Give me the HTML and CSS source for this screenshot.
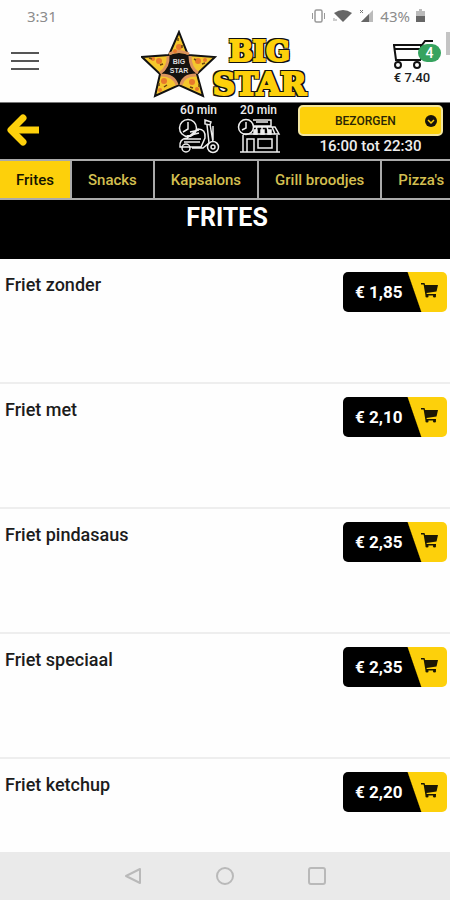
FILE: index.html
```html
<!DOCTYPE html>
<html lang="nl">
<head>
<meta charset="utf-8">
<meta name="viewport" content="width=device-width, initial-scale=1">
<title>Big Star</title>
<link rel="stylesheet" href="styles.css">
</head>
<body>
<svg hidden>
  <symbol id="cart" viewBox="0 0 18 16">
    <path d="M0 1h3.500l.6 2H17l-1.500 6.500L5.500 11l.3 1H15v1.500H4.500L2.600 2.500H0z"/>
    <circle cx="6" cy="14" r="1.600"/><circle cx="13.500" cy="14" r="1.600"/>
  </symbol>
</svg>
<div class="status">
  <span>3:31</span>
  <div class="status-icons">
    <svg width="16" height="14" viewBox="0 0 16 14" fill="none" stroke="#999"><rect x="4" y="1" width="7" height="12" rx="1.500" stroke-width="1.500"/><path d="M1.500 4v6M13.500 4v6"/></svg>
    <svg width="20" height="14" viewBox="0 0 20 14"><path d="M1 4Q10-2 19 4L10 13z" fill="#666"/><path d="M1 9v3M3 10v2" stroke="#999"/></svg>
    <svg width="15" height="14" viewBox="0 0 15 14"><path d="M14 1v12H2z" fill="#bbb"/><path d="M10 5v8H2z" fill="#666"/><path d="M1 1l3 3M4 1L1 4" stroke="#777"/></svg>
    <span>43%</span>
    <svg width="9" height="14" viewBox="0 0 9 14"><path d="M3 0h3v2h3v5H0V2h3z" fill="#bbb"/><path d="M0 7h9v6H0z" fill="#666"/></svg>
  </div>
</div>
<header class="header">
  <button class="menu" aria-label="Menu"><i></i><i></i><i></i></button>
  <a class="logo" href="#">
    <svg width="76" height="68" viewBox="0 0 76 68">
      <path d="M38 2L47 25 74 27 56 44 62 66 38 55 14 66 19 44 1 27 28 25z" fill="#f5c72c" stroke="#111" stroke-width="2"/>
      <path d="M28 25Q38 21 48 25 48 35 56 44 43 46 38 55 32 46 19 44 28 36 28 25z" fill="#15120f"/>
      <g fill="none" stroke="#dc935d" stroke-width="3"><path d="M28 24q10-5 20 0M49 26q0 12 8 17M55 45q-13 0-15 10M36 55q-3-10-16-10M19 43q9-6 8-17"/></g>
      <g fill="#e8792c"><circle cx="38" cy="17" r="3"/><circle cx="34" cy="21" r="2"/><circle cx="57" cy="31" r="3"/><circle cx="64" cy="30" r="2"/><circle cx="18" cy="31" r="3"/><circle cx="12" cy="29" r="2"/><circle cx="23" cy="51" r="3"/><circle cx="19" cy="60" r="2"/><circle cx="51" cy="52" r="3"/><circle cx="56" cy="59" r="2"/></g>
      <path d="M37 8v3M41 15v3M61 34l3-1M53 29l2 1M22 34l-3 1M8 28l3 1M18 53v3M26 55l-3 2M49 57l3 1M58 54v3" stroke="#6a4510" stroke-width="1.500"/>
      <text class="logo-small" x="38" y="34" text-anchor="middle">BIG</text>
      <text class="logo-small" x="38" y="43" text-anchor="middle">STAR</text>
    </svg>
    <span class="wordmark"><span class="big">BIG</span><span>STAR</span></span>
  </a>
  <button class="basket">
    <svg width="42" height="30" viewBox="0 0 42 30" fill="none" stroke="#111" stroke-width="2"><path d="M2 6h29l3-4h8M3 6l2 15h25M4 10h25M30 6v15" /><circle cx="7" cy="26" r="3"/><circle cx="26" cy="26" r="3"/></svg>
    <span class="count">4</span>
    <span class="total">€ 7.40</span>
  </button>
  <div class="scrollbar"></div>
</header>
<section class="delivery">
  <a class="back" href="#" aria-label="Terug"><svg width="34" height="34" viewBox="0 0 34 34" fill="none" stroke="#fdd00b" stroke-width="7" stroke-linecap="round" stroke-linejoin="round"><path d="M18 5L6 17l12 12"/><path d="M8 17h26" stroke-linecap="butt"/></svg></a>
  <div class="times">
    <div class="time"><span>60 min</span>
      <svg width="44" height="36" viewBox="0 0 44 36" fill="none" stroke="#eee" stroke-width="1.500"><circle cx="11" cy="10" r="8.500"/><path d="M11 4v7l-5 3M21 11q8 0 7 9l-4 9H3q-1-8 7-9zM7 21h17M10 18l12-3M7 24h16M13 14l9-2M28 2l6 2-1 3-5-1zM33 6l3 18M30 7l2 18-6 5H15M36 8v14"/><circle cx="9" cy="30" r="4"/><circle cx="36" cy="29" r="5.500"/><circle cx="36" cy="29" r="2"/></svg>
    </div>
    <div class="time"><span>20 min</span>
      <svg width="44" height="36" viewBox="0 0 44 36" fill="none" stroke="#eee" stroke-width="1.500"><circle cx="9" cy="9" r="7.500"/><path d="M9 4v6l-4 2M16 2h18v6H17M19 4h12M16 9h22l4 7H6M20 9l-2 7M25 9v7M30 9l2 7M35 9l3 7M6 17v17M40 17v17M3 34h40M10 34V21h7v13M21 21h14v9H21z"/><path d="M17 12h3v4h-3zM24 12h3v4h-3zM31 12h3v4h-3z" fill="#eee"/></svg>
    </div>
  </div>
  <div class="mode">
    <button class="mode-button"><span>BEZORGEN</span><svg width="12" height="12" viewBox="0 0 12 12"><circle cx="6" cy="6" r="6" fill="#15130a"/><path d="M3 5l3 3 3-3" fill="none" stroke="#fdd00b" stroke-width="1.500"/></svg></button>
    <span class="hours">16:00 tot 22:30</span>
  </div>
</section>
<nav class="tabs">
  <a class="active" href="#">Frites</a><a href="#">Snacks</a><a href="#">Kapsalons</a><a href="#">Grill broodjes</a><a href="#">Pizza's</a>
</nav>
<main>
  <h1>FRITES</h1>
  <ul class="products">
    <li><span>Friet zonder</span><button class="add"><span>€ 1,85</span><svg width="18" height="16"><use href="#cart"/></svg></button></li>
    <li><span>Friet met</span><button class="add"><span>€ 2,10</span><svg width="18" height="16"><use href="#cart"/></svg></button></li>
    <li><span>Friet pindasaus</span><button class="add"><span>€ 2,35</span><svg width="18" height="16"><use href="#cart"/></svg></button></li>
    <li><span>Friet speciaal</span><button class="add"><span>€ 2,35</span><svg width="18" height="16"><use href="#cart"/></svg></button></li>
    <li><span>Friet ketchup</span><button class="add"><span>€ 2,20</span><svg width="18" height="16"><use href="#cart"/></svg></button></li>
  </ul>
</main>
<footer class="system">
  <button aria-label="Vorige"><svg width="18" height="18" viewBox="0 0 18 18"><path d="M2 9L16 2v14z"/></svg></button>
  <button aria-label="Start"><svg width="18" height="18" viewBox="0 0 18 18"><circle cx="9" cy="9" r="8"/></svg></button>
  <button aria-label="Recent"><svg width="18" height="18" viewBox="0 0 18 18"><rect x="1" y="1" width="16" height="16" rx="2"/></svg></button>
</footer>
</body>
</html>
```
FILE: styles.css
```css
* { box-sizing: border-box; }
html, body { height: 100%; }
body {
  margin: 0;
  display: flex;
  flex-direction: column;
  overflow: hidden;
  background: #fefefe;
  color: #1c1c1c;
  font-family: Roboto, "Liberation Sans", sans-serif;
}
button { margin: 0; padding: 0; border: 0; background: none; color: inherit; font: inherit; }
a { color: inherit; text-decoration: none; }
svg { display: block; flex: none; }
svg[hidden] { display: none; }

.status {
  flex: none;
  display: flex;
  justify-content: space-between;
  align-items: center;
  height: 32px;
  padding: 0 25px 0 27px;
  color: #8c8c8c;
  font: 15px/32px "Noto Sans", sans-serif;
}
.status-icons { display: flex; align-items: center; gap: 6px; }

.header {
  flex: none;
  position: relative;
  display: flex;
  align-items: center;
  justify-content: space-between;
  height: 71px;
  padding: 0 16px 6px 11px;
  border-bottom: 1px solid #777;
}
.menu { display: grid; gap: 6px; width: 28px; margin-top: -6px; }
.menu i { height: 2px; background: #555; }
.logo { display: flex; align-items: center; margin-left: 18px; }
.logo-small { font: bold 7px "Liberation Sans", sans-serif; fill: #ddd; }
.wordmark {
  display: flex;
  flex-direction: column;
  align-items: center;
  margin-left: -4px;
  padding-top: 8px;
  font: bold 31px/33px "DejaVu Serif", serif;
  color: #fdd00b;
  -webkit-text-stroke: 2px #fdd00b;
  text-shadow: 2px 0 #111, -2px 0 #111, 0 2px #111, 0 -2px #111, 2px 2px #111, -2px -2px #111, 2px -2px #111, -2px 2px #111;
}
.big { font-size: 28px; }
.basket { position: relative; display: grid; justify-items: center; width: 44px; margin-top: -4px; }
.count {
  position: absolute;
  top: 5px;
  right: -7px;
  width: 23px;
  border-radius: 10px;
  background: #36a35f;
  color: #fff;
  font-size: 14px;
  font-weight: 500;
  line-height: 18px;
  text-align: center;
}
.total { font-size: 13px; font-weight: 500; line-height: 17px; white-space: nowrap; }
.scrollbar { position: absolute; top: 0; right: 0; width: 4px; height: 23px; background: #c4c4c4; }

.delivery {
  flex: none;
  display: flex;
  align-items: flex-start;
  justify-content: space-between;
  height: 56px;
  padding: 0 7px 0 5px;
  background: #000;
  color: #eee;
}
.back { margin-top: 10px; }
.times { display: flex; gap: 16px; margin-left: 120px; }
.time { display: grid; justify-items: center; width: 44px; font-size: 12px; font-weight: 500; line-height: 15px; white-space: nowrap; }
.mode { display: grid; width: 145px; padding-top: 2px; justify-items: center; }
.mode-button {
  display: flex;
  align-items: center;
  justify-content: space-between;
  width: 100%;
  height: 31px;
  padding: 0 4px 0 35px;
  border: 2px solid #f3e6a0;
  border-radius: 5px;
  background: #fdd00b;
  color: #2a2505;
  font-size: 12px;
  font-weight: 500;
}
.hours { font-size: 15px; font-weight: 500; line-height: 20px; white-space: nowrap; }

.tabs {
  flex: none;
  display: flex;
  height: 41px;
  overflow: hidden;
  border: solid #aaa;
  border-width: 2px 0;
  background: #000;
  color: #d3bf50;
  font-size: 15px;
  font-weight: 500;
  line-height: 38px;
}
.tabs a { flex: none; padding: 0 16px; border-right: 2px solid #aaa; }
.tabs a:last-child { border-right: 0; }
.tabs .active { background: #fdd00b; color: #151300; }

main { flex: 1; min-height: 0; overflow: hidden; }
h1 {
  height: 59px;
  margin: 0;
  padding: 1px 0 0 4px;
  background: #000;
  color: #fff;
  font-size: 25px;
  font-weight: 700;
  line-height: 34px;
  text-align: center;
}
.products { margin: 0; padding: 0; list-style: none; }
.products li {
  display: flex;
  justify-content: space-between;
  align-items: flex-start;
  height: 125px;
  padding: 13px 3px 0 5px;
  border-bottom: 2px solid #eee;
  font-size: 18px;
  font-weight: 500;
  line-height: 26px;
}
.add {
  display: flex;
  align-items: center;
  justify-content: space-between;
  width: 104px;
  height: 40px;
  padding: 0 8px 0 12px;
  border-radius: 5px;
  background: linear-gradient(71deg, #000 66%, #fdd00b 67%);
  color: #fff;
  font-size: 17px;
  font-weight: 700;
}
.add svg { fill: #1b1704; margin-bottom: 4px; }

.system {
  flex: none;
  display: flex;
  justify-content: center;
  align-items: center;
  gap: 74px;
  height: 48px;
  background: #eaeaea;
}
.system svg { fill: none; stroke: #b9b9b9; stroke-width: 2; stroke-linejoin: round; }
```
